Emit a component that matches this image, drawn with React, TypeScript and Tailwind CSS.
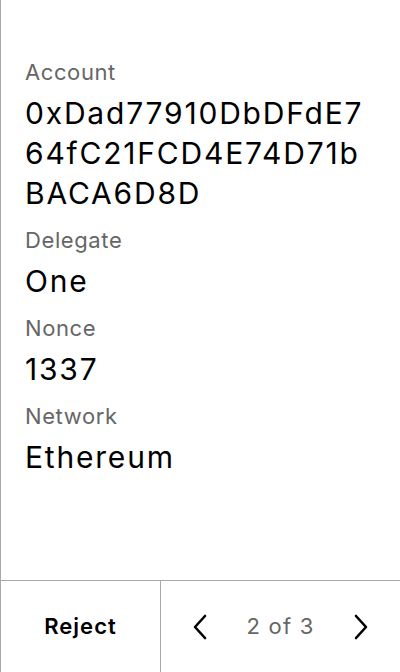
import React from "react";

const rows = [
  { label: "Account", value: "0xDad77910DbDFdE764fC21FCD4E74D71bBACA6D8D" },
  { label: "Delegate", value: "One" },
  { label: "Nonce", value: "1337" },
  { label: "Network", value: "Ethereum" },
];

function Chevron({ dir }: { dir: "left" | "right" }) {
  return (
    <svg width="16" height="26" viewBox="0 0 16 26" fill="none">
      <path
        d={dir === "left" ? "M13 2 L3 13 L13 24" : "M3 2 L13 13 L3 24"}
        stroke="#000"
        strokeWidth="2.6"
        strokeLinecap="round"
        strokeLinejoin="round"
      />
    </svg>
  );
}

export default function App() {
  return (
    <div
      className="flex h-[672px] w-[400px] flex-col border-l border-[#aaaaaa] bg-white text-black"
      style={{ fontFamily: "Inter, 'Noto Sans', sans-serif" }}
    >
      {/* Details */}
      <div className="flex flex-1 flex-col gap-[13px] pl-6 pr-[29px] pt-[58px]">
        {rows.map((r) => (
          <div key={r.label} className="flex flex-col">
            <span className="text-[22px] leading-[28px] tracking-[0.6px] text-[#666666]">{r.label}</span>
            <span className="mt-[7px] break-all text-[30px] leading-[40px] tracking-[1.8px]">{r.value}</span>
          </div>
        ))}
      </div>

      {/* Footer */}
      <div className="flex h-[92px] border-t border-[#aaaaaa]">
        <button className="flex w-[160px] items-center justify-center border-r border-[#aaaaaa] text-[22px] font-semibold tracking-[1px]">
          Reject
        </button>
        <div className="flex flex-1 items-center justify-between px-[31px]">
          <Chevron dir="left" />
          <span className="text-[22px] tracking-[1.2px] text-[#666666]">2 of 3</span>
          <Chevron dir="right" />
        </div>
      </div>
    </div>
  );
}
